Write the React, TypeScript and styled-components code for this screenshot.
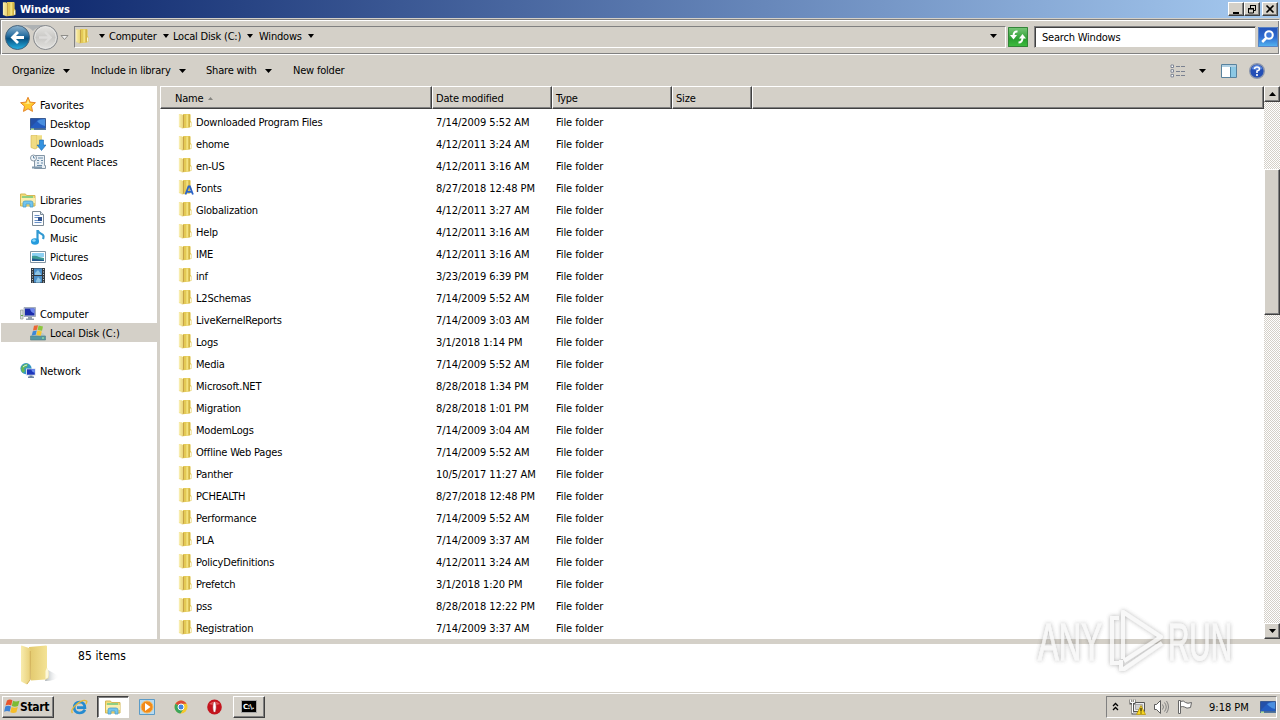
import React from 'react';
import styled, { createGlobalStyle, css } from 'styled-components';

const colors = {
  face: '#d4d0c8',
  shadow: '#808080',
  dark: '#404040',
  light: '#ffffff',
};

const GlobalStyle = createGlobalStyle`
  * {
    box-sizing: border-box;
  }

  body {
    margin: 0;
    overflow: hidden;
    background: ${colors.face};
    color: #000;
    font-family: 'DejaVu Sans Condensed', 'DejaVu Sans', 'Noto Sans', sans-serif;
    font-stretch: condensed;
    font-size: 11px;
    letter-spacing: -0.2px;
    line-height: 13px;
  }

  svg {
    display: block;
    flex: none;
  }
`;

const raised = css`
  background: ${colors.face};
  border: 1px solid;
  border-color: ${colors.light} ${colors.dark} ${colors.dark} ${colors.light};
  box-shadow: inset -1px -1px 0 ${colors.shadow};
`;

const Desktop = styled.div`
  width: 1280px;
  height: 720px;
  display: flex;
  flex-direction: column;
  white-space: nowrap;
`;

const TitleBar = styled.header`
  height: 18px;
  display: flex;
  align-items: center;
  padding: 0 2px;
  background: linear-gradient(90deg, #0a246a, #a6caf0);
`;

const TitleText = styled.h1`
  flex: 1;
  margin: 0 0 0 2px;
  color: #fff;
  font-size: 11px;
  font-weight: bold;
  letter-spacing: -0.05px;
`;

const WindowButton = styled.button<{ $gap?: number }>`
  ${raised}
  width: 16px;
  height: 14px;
  margin: 0 0 0 ${({ $gap }) => $gap ?? 0}px;
  padding: 0;
  display: flex;
  align-items: center;
  justify-content: center;
`;

const NavBar = styled.nav`
  height: 36px;
  margin-top: 1px;
  padding: 0 1px 0 4px;
  display: flex;
  align-items: center;
  border: 1px solid;
  border-color: ${colors.shadow} ${colors.light} ${colors.light} ${colors.shadow};
  box-shadow: inset 1px 1px 0 ${colors.light}, inset -1px -1px 0 ${colors.shadow};
`;

const AddressBox = styled.div`
  width: 932px;
  height: 22px;
  margin-left: 5px;
  padding-bottom: 2px;
  display: flex;
  align-items: center;
  border: 1px solid;
  border-color: ${colors.shadow} ${colors.light} ${colors.light} ${colors.shadow};
`;

const Crumb = styled.span<{ $width: number }>`
  width: ${({ $width }) => $width}px;
  display: flex;
  align-items: center;
  gap: 6px;
`;

const CrumbRoot = styled(Crumb)`
  padding-left: 8px;
`;

const Spacer = styled.div`
  flex: 1;
`;

const IconButton = styled.div<{ $tone: string }>`
  width: 20px;
  height: 20px;
  margin-left: 2px;
  display: flex;
  align-items: center;
  justify-content: center;
  background: ${({ $tone }) => $tone};
`;

const SearchBox = styled.div`
  width: 222px;
  height: 22px;
  margin-left: 6px;
  padding: 4px 7px 0;
  background: #fff;
  border: 1px solid;
  border-color: ${colors.shadow} ${colors.face} ${colors.face} ${colors.shadow};
  box-shadow: inset 1px 1px 0 ${colors.dark};
`;

const Toolbar = styled.div`
  height: 31px;
  padding: 0 15px 0 12px;
  display: flex;
  align-items: center;
`;

const ToolItem = styled.div<{ $width: number }>`
  width: ${({ $width }) => $width}px;
  display: flex;
  align-items: center;
  gap: 8px;
`;

const Main = styled.main`
  height: 553px;
  display: flex;
`;

const Sidebar = styled.aside`
  width: 160px;
  padding-top: 9px;
  background: linear-gradient(90deg, #fff 157px, ${colors.face} 157px);
`;

const TreeGroup = styled.ul`
  margin: 0 0 19px;
  padding: 0;
  list-style: none;
`;

const TreeItem = styled.li<{ $child?: boolean; $selected?: boolean }>`
  height: 19px;
  margin-left: 1px;
  padding-left: ${({ $child }) => ($child ? 29 : 19)}px;
  display: flex;
  align-items: center;
  gap: 4px;
  background: ${({ $selected }) => ($selected ? colors.face : 'transparent')};
`;

const TreeLabel = styled.span`
  padding-top: 2px;
  letter-spacing: -0.1px;
`;

const FileArea = styled.section`
  width: 1104px;
  background: #fff;
`;

const HeaderRow = styled.div`
  height: 23px;
  display: grid;
  grid-template-columns: 272px 120px 120px 80px 512px;
`;

const HeaderCell = styled.div<{ $indent?: number }>`
  ${raised}
  padding: 2px 0 0 ${({ $indent }) => $indent ?? 3}px;
  display: flex;
  align-items: center;
  gap: 5px;
`;

const FileList = styled.div`
  padding-top: 2px;
`;

const FileRow = styled.div`
  height: 22px;
  display: grid;
  grid-template-columns: 276px 120px 120px;
  align-items: center;
`;

const FileName = styled.div`
  padding-left: 18px;
  display: flex;
  align-items: center;
  gap: 2px;

  svg {
    margin: -1px 0 1px;
  }
`;

const FileDate = styled.time`
  letter-spacing: -0.06px;
`;

const FileType = styled.span`
  letter-spacing: -0.1px;
`;

const ScrollTrack = styled.div`
  width: 16px;
  display: flex;
  flex-direction: column;
  background: repeating-conic-gradient(#fff 0 25%, ${colors.face} 0 50%) 0 0 / 2px 2px;
`;

const ScrollButton = styled.div`
  ${raised}
  height: 16px;
  display: flex;
  align-items: center;
  justify-content: center;
`;

const ScrollThumb = styled.div`
  ${raised}
  height: 146px;
  margin: 67px 0 308px;
`;

const DetailsPane = styled.footer`
  position: relative;
  height: 54px;
  padding: 0 0 0 16px;
  display: flex;
  background: #fff;
  border-top: 5px solid ${colors.face};
  border-bottom: 1px solid ${colors.face};
`;

const ItemCount = styled.div`
  margin: 6px 0 0 18px;
  font-size: 12px;
  letter-spacing: 0.1px;
`;

const Watermark = styled.svg`
  position: absolute;
  right: 42px;
  top: -42px;
  overflow: visible;
`;

const Taskbar = styled.div`
  height: 27px;
  padding: 1px 3px 2px 2px;
  display: flex;
  align-items: center;
  border-top: 1px solid #fff;
`;

const StartButton = styled.button`
  ${raised}
  width: 52px;
  height: 22px;
  padding: 0 0 0 1px;
  display: flex;
  align-items: center;
  color: #000;
  font: bold 12px 'DejaVu Sans Condensed', 'DejaVu Sans', sans-serif;
  font-stretch: condensed;
  letter-spacing: -0.3px;
`;

const QuickLaunch = styled.div`
  margin-left: 7px;
  display: flex;
`;

const TaskButton = styled.div<{ $state?: 'open' | 'active' }>`
  width: 32px;
  height: 22px;
  margin-left: 2px;
  display: flex;
  align-items: center;
  justify-content: center;
  ${({ $state }) => $state === 'open' && raised}
  ${({ $state }) =>
    $state === 'active' &&
    css`
      background: #fff;
      border: 1px solid;
      border-color: ${colors.dark} ${colors.light} ${colors.light} ${colors.dark};
      box-shadow: inset 1px 1px 0 ${colors.shadow};
    `}
`;

const Tray = styled.div`
  width: 171px;
  height: 22px;
  padding-left: 5px;
  display: flex;
  align-items: center;
  border: 1px solid;
  border-color: ${colors.shadow} ${colors.light} ${colors.light} ${colors.shadow};
`;

const TrayIcons = styled.div`
  margin-left: 10px;
  display: flex;
  gap: 7px;
`;

const Clock = styled.span`
  width: 51px;
  margin-left: 15px;
  padding-top: 1px;
  letter-spacing: 0;
`;

const Arrow = ({ size = 7, up = false }: { size?: number; up?: boolean }) => (
  <svg width={size} height="4" viewBox="0 0 8 4" preserveAspectRatio="none">
    <path d={up ? 'M0 4h8L4 0z' : 'M0 0h8L4 4z'} />
  </svg>
);

const FolderIcon = ({ font = false }: { font?: boolean }) => (
  <svg width="16" height="16" viewBox="0 0 16 16">
    <path d="M5 1h7l.6.8v6l.9 1.2v4.8l-1.9.7L5 15.2z" fill="#e3c955" />
    <path d="M8.3 1.5h2V14.3l-2 .3z" fill="#f3e27f" />
    <path d="M10.6 1.5h1.2V14l-1.2.4z" fill="#cfb045" />
    <path d="M.9 1.2h2.8l2 1V14l-1.2 1.3L.9 14z" fill="#f0df89" />
    <path d="M5.4 2v12.3l-1 1" fill="none" stroke="#c39c41" />
    <path d="M1.8 2v11.5" stroke="#fbf2be" />
    <path d="M12.6 9.5v4" stroke="#fdfae6" />
    {font && (
      <path d="m7.5 15.5 3-8h1.4l3 8M9 12.8h4.5" fill="none" stroke="#2a63c8" strokeWidth="1.8" />
    )}
  </svg>
);

const LibraryIcon = () => (
  <svg width="16" height="16" viewBox="0 0 16 16">
    <path d="M.5 2h5l1 1.5H15V14H.5z" fill="#f3dc77" stroke="#d4b755" />
    <path d="M2 4h11v2H2z" fill="#8fcf83" />
    <path d="M1 6h14v5H1z" fill="#fbeeac" />
    <path d="M3 15v-4q0-2 2-2h6q2 0 2 2v4h-3v-3H6v3z" fill="#72c5ee" stroke="#4d9fca" strokeWidth=".8" />
  </svg>
);

const StarIcon = () => (
  <svg width="16" height="16" viewBox="0 0 16 16">
    <path
      d="m8 .3 2.1 4.8 5.3.6-3.9 3.5 1 5.2L8 11.8l-4.5 2.6 1-5.2L.6 5.7l5.3-.6z"
      fill="#ffc92e"
      stroke="#e5862b"
    />
    <path d="m8 2.5 1.3 3.8 3.2.4H4l3-.6z" fill="#fff2a0" />
  </svg>
);

const ScreenIcon = () => (
  <svg width="16" height="16" viewBox="0 0 16 16">
    <path d="M.5 2.5h15v10H.5z" fill="#235cc0" stroke="#3a5a92" />
    <path d="M1 3h8L1 11z" fill="#2450a8" />
    <path d="M15 3v7q-5-1-8-5 3-2 8-2z" fill="#4a8fdf" />
    <path d="M0 12.5h16V14H0z" fill="#53779c" />
    <path d="M1 12.5h3V14H1z" fill="#b2df98" />
  </svg>
);

const DownloadIcon = () => (
  <svg width="16" height="16" viewBox="0 0 16 16">
    <path d="M1 .5 7 0v13l-2 1-4-1.5z" fill="#f1dc83" stroke="#d3b34b" strokeWidth=".6" />
    <path d="M7 .3h5v12L7 13z" fill="#f0de86" />
    <path d="M9.5 5h4v5H16l-4.5 5.5L7 10h2.5z" fill="#3392e0" stroke="#1964ad" strokeWidth=".6" />
  </svg>
);

const RecentIcon = () => (
  <svg width="16" height="16" viewBox="0 0 16 16">
    <path d="M4.5 1.5h10v10h1v3h-11z" fill="#e7eef4" stroke="#8496a6" />
    <circle cx="3.5" cy="4" r="3" fill="#f2f7fb" stroke="#8998a5" />
    <path d="M3.5 2v2H5M8 4h5M7 6.5h2m2 0h2M7 9h2m2 0h2M7 11.5h5" fill="none" stroke="#688aa7" />
    <path d="M2 13.5h10" stroke="#8199ad" strokeWidth="2" />
  </svg>
);

const DocumentIcon = () => (
  <svg width="16" height="16" viewBox="0 0 16 16">
    <path d="M2.5.5h8l3 3v11h-11z" fill="#fbfdff" stroke="#7b8995" />
    <path d="M10.5.5v3h3" fill="#dbe4eb" stroke="#7b8995" />
    <path d="M4.5 4.5h5M4.5 6.5H8M4.5 9.5H8M4.5 11.5h7" stroke="#6a91c7" />
    <path d="M8 6h4v4H8z" fill="#315491" />
  </svg>
);

const MusicIcon = () => (
  <svg width="16" height="16" viewBox="0 0 16 16">
    <path d="M7.5 12V0q1 3 4 4t1.5 5" fill="none" stroke="#3199d2" strokeWidth="2.2" />
    <ellipse cx="5" cy="11.5" rx="4" ry="3.3" fill="#259bdd" />
    <ellipse cx="4" cy="10.5" rx="1.7" ry="1.2" fill="#8dd9fb" />
  </svg>
);

const PictureIcon = () => (
  <svg width="16" height="16" viewBox="0 0 16 16">
    <path d="M.5 2.5h15v11H.5z" fill="#fff" stroke="#8395a3" />
    <path d="M2 4h12v4H2z" fill="#8dd0f2" />
    <path d="M2 7q4-1 7 1l5 1v3H2z" fill="#3d9a94" />
    <path d="M2 9.5 14 11v1H2z" fill="#21598e" />
  </svg>
);

const VideoIcon = () => (
  <svg width="16" height="16" viewBox="0 0 16 16">
    <path d="M1 0h14v15H1z" fill="#333a40" />
    <path d="M4 .5h8V7H4zM4 8h8v6.5H4z" fill="#4b8fc9" />
    <path d="m5 5 3-3 3 4v1H5zM6 13l2-4 3 3-1 2.5H6z" fill="#8fc5e4" />
    <path d="M2.5 1v14M13.5 1v14" stroke="#c9d0d6" strokeDasharray="1 1.5" />
  </svg>
);

const ComputerIcon = () => (
  <svg width="16" height="16" viewBox="0 0 16 16">
    <path d="M.5 4h2.5v9H.5z" fill="#d8dedc" stroke="#8f9996" strokeWidth=".7" />
    <path d="M1 9h2v1H1z" fill="#64ac4a" />
    <path d="M4 1.5h11.5v9H4z" fill="#c5ccd9" stroke="#78869a" strokeWidth=".6" />
    <path d="M5 2.5h9.5v7H5z" fill="#1b2cab" />
    <path d="M10 2.5h4.5v5q-4-1-4.5-5z" fill="#6c86ed" />
    <path d="M8 11h4v1.5h2V14H6v-1.5h2z" fill="#8f9cab" />
  </svg>
);

const DiskIcon = () => (
  <svg width="16" height="16" viewBox="0 0 16 16">
    <path d="m1 10 2-2h10l2.5 3v4H1z" fill="#b9c8cb" />
    <path d="M.5 11h15v4H.5z" fill="#5598a2" stroke="#557d84" strokeWidth=".6" />
    <path d="M12 13h2" stroke="#a9f5a3" />
    <path d="m4 .8 4-.6-1 4.6-4 .8z" fill="#eb6835" />
    <path d="m8.6.4 4.4 1-1 4.4-4.4-.9z" fill="#8cc63d" />
    <path d="m2.8 6.2 4-.8-1 4.4-4 .8z" fill="#3d88d7" />
    <path d="m7.4 5.6 4.4.8-1 4.4-4.4-.9z" fill="#f8c62d" />
  </svg>
);

const NetworkIcon = () => (
  <svg width="16" height="16" viewBox="0 0 16 16">
    <circle cx="6" cy="5.6" r="5.6" fill="#3496c5" />
    <path d="M2 3q4-3 6-2L7 4 4 5l1 3-2 2Q0 7 2 3z" fill="#67b952" />
    <path d="M3 4q2-2 4-2" stroke="#c7f0f6" fill="none" />
    <path d="M6 5.5h9.5v7H6z" fill="#d3dae7" />
    <path d="M7 6.3h7.8v5.4H7z" fill="#1d37bc" />
    <path d="M11 6.3h3.8v3.4q-3-.5-3.8-3.4z" fill="#6a8df0" />
    <path d="M9.5 12.5h3v1H14V15H8v-1.5h1.5z" fill="#6e85a2" />
  </svg>
);

const FlagLogo = () => (
  <svg width="16" height="16" viewBox="0 0 16 16">
    <path d="M3 1.5q2.8-1.8 5.4-.2L7.2 6.5Q4.5 5 1.5 6.5z" fill="#e8552c" />
    <path d="M9 1.8q2.7 1.6 6.5 0L14 7q-3.2 1.6-6.2 0z" fill="#7dbb35" />
    <path d="M1.3 7.5q2.8-1.5 5.7 0l-1.3 5.1Q3 11.2.1 12.7z" fill="#3e83d5" />
    <path d="M7.6 8q2.8 1.5 6.2 0l-1.4 5.2q-3.1 1.5-6.1 0z" fill="#f6bd29" />
  </svg>
);

const NavButtons = () => (
  <svg width="64" height="28" viewBox="0 0 64 28">
    <defs>
      <linearGradient id="back" x2="0" y2="1">
        <stop offset="0" stopColor="#8fb4cf" />
        <stop offset=".4" stopColor="#2f74a5" />
        <stop offset=".55" stopColor="#075182" />
        <stop offset="1" stopColor="#27b3e5" />
      </linearGradient>
      <linearGradient id="forward" x2="0" y2="1">
        <stop offset="0" stopColor="#e6e5e2" />
        <stop offset=".5" stopColor="#c9c8c5" />
        <stop offset="1" stopColor="#e4e3e0" />
      </linearGradient>
    </defs>
    <path d="M12 2h32q-14 2-16 6-4-5-16-6z" fill="#aeb2b4" />
    <circle cx="12.5" cy="14.5" r="12" fill="url(#back)" stroke="#46637b" />
    <path d="M19 14.5H8m5-5.5-5.5 5.5L13 20" fill="none" stroke="#fff" strokeWidth="2.8" />
    <circle cx="40.5" cy="14.5" r="12" fill="url(#forward)" stroke="#83868a" />
    <circle cx="40.5" cy="14.5" r="10.7" fill="none" stroke="#e6e6e4" />
    <path d="M34 14.5h11m-5-5.5 5.5 5.5L40 20" fill="none" stroke="#dddcda" strokeWidth="2.4" />
    <path d="M56 12.5h7L59.5 16.5z" fill="#eee" stroke="#8e8d89" />
  </svg>
);

const RefreshIcon = () => (
  <svg width="20" height="20" viewBox="0 0 20 20">
    <path d="M.5.5h19v19H.5z" fill="none" stroke="#338438" />
    <path d="M9.5 4.5Q5.5 4 5.5 9" fill="none" stroke="#fff" strokeWidth="2" />
    <path d="M2 8h7l-3.5 4.5z" fill="#fff" />
    <path d="M10.5 15.5q4 0 4-5" fill="none" stroke="#fff" strokeWidth="2" />
    <path d="M11 11.5h7L14.5 7z" fill="#fff" />
  </svg>
);

const SearchIcon = () => (
  <svg width="20" height="20" viewBox="0 0 20 20">
    <path d="M.5.5h19v19H.5z" fill="none" stroke="#5982c3" />
    <circle cx="11" cy="8" r="3.8" fill="#3f79d9" stroke="#fff" strokeWidth="2" />
    <path d="m8.2 11-4 4" stroke="#fff" strokeWidth="2.5" />
  </svg>
);

const ViewIcon = () => (
  <svg width="16" height="14" viewBox="0 0 16 14">
    <path d="M1 1h2.5v2.5H1zm0 4.7h2.5v2.5H1zm0 4.7h2.5v2.5H1z" fill="#fff" stroke="#7d8494" />
    <path d="M6 2.5h4m1 0h4M6 7.5h4m1 0h4M6 11.5h4m1 0h4" stroke="#7a8190" />
  </svg>
);

const PreviewIcon = () => (
  <svg width="16" height="14" viewBox="0 0 16 14">
    <path d="M.5.5h15v13H.5z" fill="#fff" stroke="#58829e" />
    <path d="M1 1h14v2H1z" fill="#b0d0e3" />
    <path d="M10 3h5v10h-5z" fill="#8cc8e4" />
    <path d="M9.5 3v10" stroke="#4b86a8" />
  </svg>
);

const HelpIcon = () => (
  <svg width="16" height="16" viewBox="0 0 16 16">
    <circle cx="8" cy="8" r="7.3" fill="#234eb6" stroke="#8c97ad" strokeWidth="1.4" />
    <path d="M2.5 6Q4 2 8 2t5.5 4Q8 8 2.5 6z" fill="#5b86db" />
    <path d="M5.5 6Q5.7 4 8 4t2.5 2Q10.5 7.3 8 8v2M8 11v2" fill="none" stroke="#fff" strokeWidth="1.6" />
  </svg>
);

const BigFolder = () => (
  <svg width="44" height="46" viewBox="0 0 44 46">
    <defs>
      <linearGradient id="front">
        <stop offset="0" stopColor="#f8ecae" />
        <stop offset="1" stopColor="#e8cf78" />
      </linearGradient>
      <linearGradient id="rear">
        <stop offset="0" stopColor="#e2c86c" />
        <stop offset="1" stopColor="#f5e599" />
      </linearGradient>
      <linearGradient id="cast">
        <stop offset="0" stopColor="#a9b0b5" />
        <stop offset="1" stopColor="#fff" stopOpacity="0" />
      </linearGradient>
    </defs>
    <path d="m29 37 3-11 11 6q-3 5-14 5z" fill="url(#cast)" />
    <path d="M13 3 30 1.5q1 0 1 1V24l1.5 4v6l-3 1.5-14.5 1z" fill="url(#rear)" />
    <path d="m29.5 27 1.5-3.5q2.5 4 1 10l-2.5 1.5z" fill="#fdf8dc" />
    <path d="M5.5 1.5 13 4q1.5.5 1.5 2v29l-3.5 5.5-5-2.5q-1-.5-1-1.5V2z" fill="url(#front)" />
    <path d="M14.3 7v28.5L11 40" fill="none" stroke="#cfae58" strokeWidth=".9" />
  </svg>
);

const IeIcon = () => (
  <svg width="18" height="16" viewBox="0 0 18 16">
    <path
      d="M15 10.8Q13 14 9.5 14q-5.3-.4-5.3-5.5Q4.5 3.2 9.7 3q5 .2 5.2 5.7H7"
      fill="none"
      stroke="#258bd0"
      strokeWidth="2.7"
    />
    <path d="M2.5 14Q0 11 6.5 5.5T16.5 2q1 1-.8 3" fill="none" stroke="#e7b936" strokeWidth="1.3" />
  </svg>
);

const PlayerIcon = () => (
  <svg width="16" height="16" viewBox="0 0 16 16">
    <path d="M.5.5h15v15H.5z" fill="#b8daf0" stroke="#5b9bc7" />
    <circle cx="8" cy="8" r="6" fill="#f28a19" stroke="#f7b85b" />
    <path d="m6 4 5.5 4L6 12z" fill="#fff" />
  </svg>
);

const ChromeIcon = () => (
  <svg width="14" height="14" viewBox="0 0 14 14">
    <circle cx="7" cy="7" r="6.5" fill="#f5c82d" />
    <path d="M7 7 1.4 3.8A6.5 6.5 0 0 1 12.6 3.8H7z" fill="#dc4938" />
    <path d="m7 7-5.6-3.2A6.5 6.5 0 0 0 6.5 13.5L9.6 8.7z" fill="#3ba55c" />
    <circle cx="7" cy="7" r="3" fill="#4285df" stroke="#fff" />
  </svg>
);

const OperaIcon = () => (
  <svg width="16" height="16" viewBox="0 0 16 16">
    <ellipse cx="7.5" cy="8" rx="7.3" ry="7.5" fill="#c4141d" />
    <path d="M2 5q6-5 11 0-5 2-11 0z" fill="#e35a5a" />
    <ellipse cx="7.5" cy="8" rx="1.8" ry="5.3" fill="#fff" stroke="#9b0c13" strokeWidth=".6" />
  </svg>
);

const ConsoleText = styled.span`
  width: 16px;
  height: 13px;
  padding-left: 1px;
  background: #000;
  border: 1px solid #a5a5a5;
  color: #fff;
  font: bold 7px/12px 'DejaVu Sans', sans-serif;
  letter-spacing: -0.6px;
`;

const TrayNetwork = () => (
  <svg width="17" height="16" viewBox="0 0 17 16">
    <path d="M4.5 3.5h11v9h-11z" fill="#eee" stroke="#555" />
    <path d="M6.5 5.5h7v5h-7z" fill="#d2d2d0" stroke="#aaa" />
    <path d="M1.5.5v4h4v-4M3.5 4.5v10h4" fill="none" stroke="#555" strokeWidth="2" />
    <path d="M1.5.5v3h4v-3M3.5 4v10h4" fill="none" stroke="#fff" />
    <path d="m12 6.5 4.5 9h-9z" fill="#f6d521" stroke="#b38c00" strokeWidth=".7" />
    <path d="M12 9v3.5m0 1v1" stroke="#000" />
  </svg>
);

const VolumeIcon = () => (
  <svg width="17" height="16" viewBox="0 0 17 16">
    <path d="M1.5 5.5h2l4-4v13l-4-4h-2z" fill="#fff" stroke="#5b5b5b" />
    <path
      d="M9.5 5.5q2 2.5 0 5M11.5 3.5q3.5 4.5 0 9M13.5 2q4 6 0 12"
      fill="none"
      stroke="#777"
      strokeWidth=".9"
    />
  </svg>
);

const ActionFlag = () => (
  <svg width="17" height="16" viewBox="0 0 17 16">
    <path d="M3.5 2.5q3-1.5 5 1 2 1.5 6 0l-1 5q-4 1.5-6-.5-2-1-4 0z" fill="#fff" stroke="#666" />
    <path d="M1.5 1.5v13h2v-13z" fill="#fff" stroke="#666" />
  </svg>
);

const crumbs: [string, number][] = [
  ['Computer', 64],
  ['Local Disk (C:)', 86],
  ['Windows', 58],
];

const tree: { icon: React.FC; label: string; children: [React.FC, string][] }[] = [
  {
    icon: StarIcon,
    label: 'Favorites',
    children: [
      [ScreenIcon, 'Desktop'],
      [DownloadIcon, 'Downloads'],
      [RecentIcon, 'Recent Places'],
    ],
  },
  {
    icon: LibraryIcon,
    label: 'Libraries',
    children: [
      [DocumentIcon, 'Documents'],
      [MusicIcon, 'Music'],
      [PictureIcon, 'Pictures'],
      [VideoIcon, 'Videos'],
    ],
  },
  { icon: ComputerIcon, label: 'Computer', children: [[DiskIcon, 'Local Disk (C:)']] },
  { icon: NetworkIcon, label: 'Network', children: [] },
];

const files: [string, string][] = [
  ['Downloaded Program Files', '7/14/2009 5:52 AM'],
  ['ehome', '4/12/2011 3:24 AM'],
  ['en-US', '4/12/2011 3:16 AM'],
  ['Fonts', '8/27/2018 12:48 PM'],
  ['Globalization', '4/12/2011 3:27 AM'],
  ['Help', '4/12/2011 3:16 AM'],
  ['IME', '4/12/2011 3:16 AM'],
  ['inf', '3/23/2019 6:39 PM'],
  ['L2Schemas', '7/14/2009 5:52 AM'],
  ['LiveKernelReports', '7/14/2009 3:03 AM'],
  ['Logs', '3/1/2018 1:14 PM'],
  ['Media', '7/14/2009 5:52 AM'],
  ['Microsoft.NET', '8/28/2018 1:34 PM'],
  ['Migration', '8/28/2018 1:01 PM'],
  ['ModemLogs', '7/14/2009 3:04 AM'],
  ['Offline Web Pages', '7/14/2009 5:52 AM'],
  ['Panther', '10/5/2017 11:27 AM'],
  ['PCHEALTH', '8/27/2018 12:48 PM'],
  ['Performance', '7/14/2009 5:52 AM'],
  ['PLA', '7/14/2009 3:37 AM'],
  ['PolicyDefinitions', '4/12/2011 3:24 AM'],
  ['Prefetch', '3/1/2018 1:20 PM'],
  ['pss', '8/28/2018 12:22 PM'],
  ['Registration', '7/14/2009 3:37 AM'],
];

const App: React.FC = () => {
  return (
    <Desktop>
      <GlobalStyle />
      <TitleBar>
        <FolderIcon />
        <TitleText>Windows</TitleText>
        <WindowButton>
          <svg width="10" height="10" viewBox="0 0 10 10">
            <path d="M2 8h6v2H2z" />
          </svg>
        </WindowButton>
        <WindowButton>
          <svg width="10" height="10" viewBox="0 0 10 10">
            <path d="M3 1.5h6M3.5 1v3M8.5 1v5.5H7M1 4.5h6M1.5 4v5h5V4" fill="none" stroke="#000" />
            <path d="M3 1h6v1H3zM1 4h6v1.5H1z" />
          </svg>
        </WindowButton>
        <WindowButton $gap={2}>
          <svg width="10" height="10" viewBox="0 0 10 10">
            <path d="m1.5 1.5 7 7m0-7-7 7" stroke="#000" strokeWidth="1.6" />
          </svg>
        </WindowButton>
      </TitleBar>

      <NavBar>
        <NavButtons />
        <AddressBox>
          <FolderIcon />
          <CrumbRoot $width={18}>
            <Arrow size={6} />
          </CrumbRoot>
          {crumbs.map(([label, width]) => (
            <Crumb key={label} $width={width}>
              {label}
              <Arrow size={6} />
            </Crumb>
          ))}
          <Spacer />
          <ToolItem $width={15}>
            <Arrow />
          </ToolItem>
        </AddressBox>
        <IconButton $tone="linear-gradient(#7cc87c, #2a9f31 60%, #3fbf40)">
          <RefreshIcon />
        </IconButton>
        <SearchBox>Search Windows</SearchBox>
        <IconButton $tone="linear-gradient(#2452b7, #2d6ad0 50%, #55b8f2)">
          <SearchIcon />
        </IconButton>
      </NavBar>

      <Toolbar>
        <ToolItem $width={79}>
          Organize <Arrow />
        </ToolItem>
        <ToolItem $width={115}>
          Include in library <Arrow />
        </ToolItem>
        <ToolItem $width={87}>
          Share with <Arrow />
        </ToolItem>
        New folder
        <Spacer />
        <ToolItem $width={29}>
          <ViewIcon />
        </ToolItem>
        <ToolItem $width={22}>
          <Arrow />
        </ToolItem>
        <ToolItem $width={28}>
          <PreviewIcon />
        </ToolItem>
        <HelpIcon />
      </Toolbar>

      <Main>
        <Sidebar>
          {tree.map(({ icon: Icon, label, children }) => (
            <TreeGroup key={label}>
              <TreeItem>
                <Icon />
                <TreeLabel>{label}</TreeLabel>
              </TreeItem>
              {children.map(([ChildIcon, name]) => (
                <TreeItem key={name} $child $selected={name === 'Local Disk (C:)'}>
                  <ChildIcon />
                  <TreeLabel>{name}</TreeLabel>
                </TreeItem>
              ))}
            </TreeGroup>
          ))}
        </Sidebar>
        <FileArea>
          <HeaderRow>
            <HeaderCell $indent={14}>
              Name
              <svg width="5" height="3" viewBox="0 0 5 3">
                <path d="M0 3h5L2.5 0z" fill="#868580" />
              </svg>
            </HeaderCell>
            <HeaderCell>Date modified</HeaderCell>
            <HeaderCell>Type</HeaderCell>
            <HeaderCell>Size</HeaderCell>
            <HeaderCell />
          </HeaderRow>
          <FileList>
            {files.map(([name, modified]) => (
              <FileRow key={name}>
                <FileName>
                  <FolderIcon font={name === 'Fonts'} />
                  {name}
                </FileName>
                <FileDate>{modified}</FileDate>
                <FileType>File folder</FileType>
              </FileRow>
            ))}
          </FileList>
        </FileArea>
        <ScrollTrack>
          <ScrollButton>
            <Arrow up />
          </ScrollButton>
          <ScrollThumb />
          <ScrollButton>
            <Arrow />
          </ScrollButton>
        </ScrollTrack>
      </Main>

      <DetailsPane>
        <BigFolder />
        <ItemCount>85 items</ItemCount>
        <Watermark width="206" height="76" viewBox="0 0 206 76">
          <defs>
            <filter id="glow" x="-10%" y="-10%" width="120%" height="120%">
              <feDropShadow dx="0" dy="0" stdDeviation="2" floodColor="#555" floodOpacity=".55" />
            </filter>
          </defs>
          <g filter="url(#glow)" fill="none" stroke="#f7f7f7" strokeWidth="4" opacity=".8">
            <path d="M87 16h-7v45h7" />
            <path d="M91 57V10l38 25-37 24" strokeLinejoin="round" />
            <path d="M92 67 130 41" />
            <path d="M89 58v9h4" />
            <g
              fill="#f7f7f7"
              strokeWidth=".8"
              fontFamily="Liberation Sans Narrow, Liberation Sans"
              fontSize="52"
              letterSpacing="0"
            >
              <text x="6" y="58" textLength="64" lengthAdjust="spacingAndGlyphs">
                ANY
              </text>
              <text x="136" y="58" textLength="64" lengthAdjust="spacingAndGlyphs">
                RUN
              </text>
            </g>
          </g>
        </Watermark>
      </DetailsPane>

      <Taskbar>
        <StartButton>
          <FlagLogo />
          Start
        </StartButton>
        <QuickLaunch>
          <TaskButton>
            <IeIcon />
          </TaskButton>
          <TaskButton $state="active">
            <LibraryIcon />
          </TaskButton>
          <TaskButton>
            <PlayerIcon />
          </TaskButton>
          <TaskButton>
            <ChromeIcon />
          </TaskButton>
          <TaskButton>
            <OperaIcon />
          </TaskButton>
          <TaskButton $state="open">
            <ConsoleText>C:\.</ConsoleText>
          </TaskButton>
        </QuickLaunch>
        <Spacer />
        <Tray>
          <svg width="7" height="9" viewBox="0 0 7 9">
            <path d="m1 4 2.5-2.5L6 4M1 8l2.5-2.5L6 8" fill="none" stroke="#000" strokeWidth="1.3" />
          </svg>
          <TrayIcons>
            <TrayNetwork />
            <VolumeIcon />
            <ActionFlag />
          </TrayIcons>
          <Clock>9:18 PM</Clock>
          <ScreenIcon />
        </Tray>
      </Taskbar>
    </Desktop>
  );
};

export default App;
